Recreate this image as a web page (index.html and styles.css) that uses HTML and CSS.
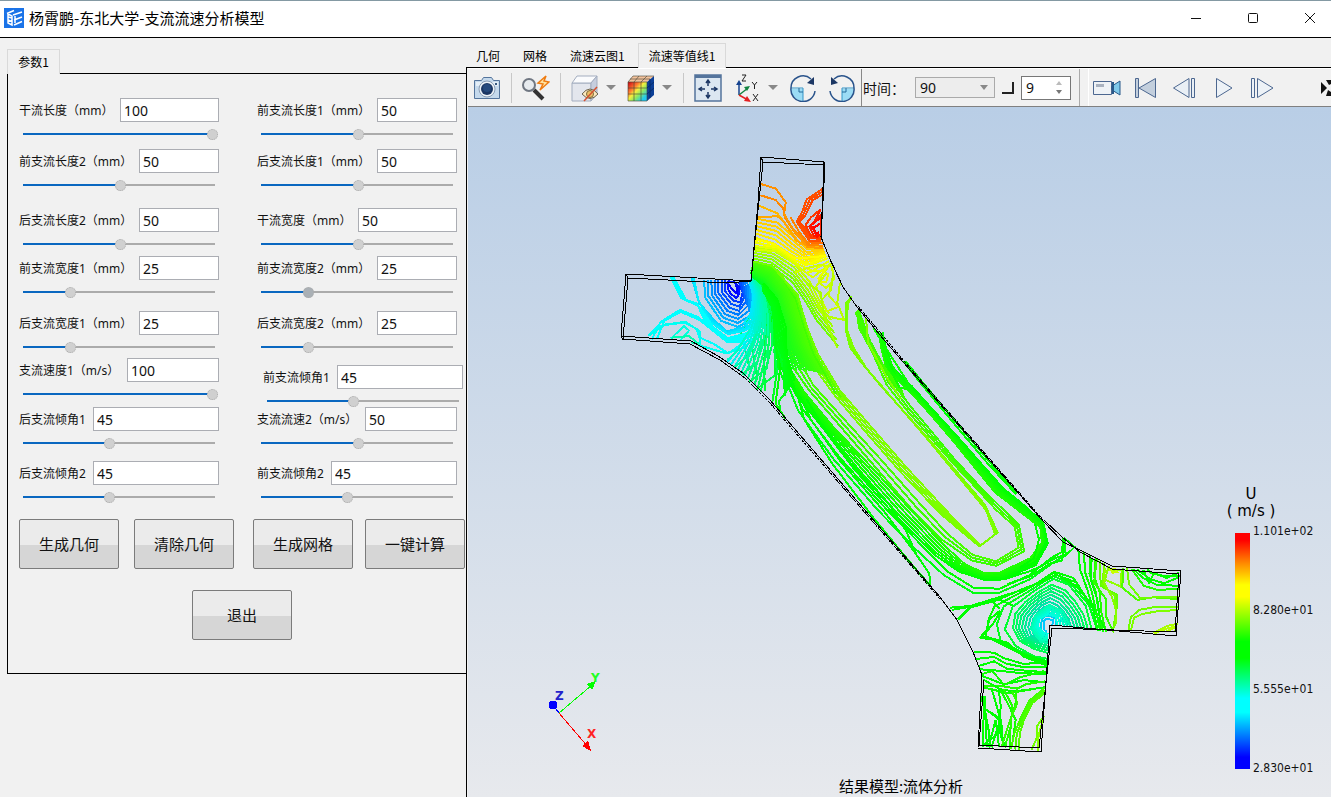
FILE: index.html
```html
<!DOCTYPE html>
<html lang="zh-CN">
<head>
<meta charset="utf-8">
<title>杨霄鹏-东北大学-支流流速分析模型</title>
<link rel="stylesheet" href="styles.css">
</head>
<body>
<div class="window">
  <header class="titlebar">
    <svg class="logo" viewBox="0 0 20 20"><rect width="20" height="20" fill="#1a73e8"/><path d="M3 5.500 10 2.500M4 6v9l4 2V8zM9 7l9-3M10 12l8-3M10 17l8-3.500M11 8v7M4 9l4 1M4 12l4 1.500" fill="none" stroke="#fff" stroke-width="1.500"/></svg>
    <h1 class="title">杨霄鹏-东北大学-支流流速分析模型</h1>
    <div class="window-buttons">
      <button class="window-button" aria-label="最小化"><svg viewBox="0 0 12 12"><path d="M1 6.500h10"/></svg></button>
      <button class="window-button" aria-label="最大化"><svg viewBox="0 0 12 12"><rect x="1.500" y="1.500" width="9" height="9" rx="1"/></svg></button>
      <button class="window-button" aria-label="关闭"><svg viewBox="0 0 12 12"><path d="m1 1 10 10M11 1 1 11"/></svg></button>
    </div>
  </header>
  <div class="body">
    <aside class="sidebar">
      <button class="tab tab-active side-tab">参数1</button>
      <form class="params">
        <div class="columns">
          <div class="column">
            <div class="field w99"><label for="a1">干流长度（mm）</label><input class="value" id="a1" value="100"><input class="slider" type="range" aria-label="干流长度" value="100" style="--fill:100%"></div>
            <div class="field w80 gap-7"><label for="a2">前支流长度2（mm）</label><input class="value" id="a2" value="50"><input class="slider" type="range" aria-label="前支流长度2" value="51" style="--fill:51%"></div>
            <div class="field w80 gap-15"><label for="a3">后支流长度2（mm）</label><input class="value" id="a3" value="50"><input class="slider" type="range" aria-label="后支流长度2" value="51" style="--fill:51%"></div>
            <div class="field w80 gap-4"><label for="a4">前支流宽度1（mm）</label><input class="value" id="a4" value="25"><input class="slider" type="range" aria-label="前支流宽度1" value="24" style="--fill:24%"></div>
            <div class="field w80 gap-11"><label for="a5">后支流宽度1（mm）</label><input class="value" id="a5" value="25"><input class="slider" type="range" aria-label="后支流宽度1" value="24" style="--fill:24%"></div>
            <div class="field w92 gap-3"><label for="a6">支流速度1（m/s）</label><input class="value" id="a6" value="100"><input class="slider" type="range" aria-label="支流速度1" value="100" style="--fill:100%"></div>
            <div class="field w126 gap-5"><label for="a7">后支流倾角1</label><input class="value" id="a7" value="45"><input class="slider" type="range" aria-label="后支流倾角1" value="45" style="--fill:45%"></div>
            <div class="field w126 gap-10"><label for="a8">后支流倾角2</label><input class="value" id="a8" value="45"><input class="slider" type="range" aria-label="后支流倾角2" value="45" style="--fill:45%"></div>
          </div>
          <div class="column">
            <div class="field w80"><label for="b1">前支流长度1（mm）</label><input class="value" id="b1" value="50"><input class="slider" type="range" aria-label="前支流长度1" value="51" style="--fill:51%"></div>
            <div class="field w80 gap-7"><label for="b2">后支流长度1（mm）</label><input class="value" id="b2" value="50"><input class="slider" type="range" aria-label="后支流长度1" value="51" style="--fill:51%"></div>
            <div class="field w99 gap-15"><label for="b3">干流宽度（mm）</label><input class="value" id="b3" value="50"><input class="slider" type="range" aria-label="干流宽度" value="51" style="--fill:51%"></div>
            <div class="field w80 gap-4"><label for="b4">前支流宽度2（mm）</label><input class="value" id="b4" value="25"><input class="slider slider-hot" type="range" aria-label="前支流宽度2" value="24" style="--fill:24%"></div>
            <div class="field w80 gap-11"><label for="b5">后支流宽度2（mm）</label><input class="value" id="b5" value="25"><input class="slider" type="range" aria-label="后支流宽度2" value="24" style="--fill:24%"></div>
            <div class="field w126 gap-10 indented"><label for="b6">前支流倾角1</label><input class="value" id="b6" value="45"><input class="slider" type="range" aria-label="前支流倾角1" value="45" style="--fill:45%"></div>
            <div class="field w92 tight"><label for="b7">支流流速2（m/s）</label><input class="value" id="b7" value="50"><input class="slider" type="range" aria-label="支流流速2" value="51" style="--fill:51%"></div>
            <div class="field w126 gap-10"><label for="b8">前支流倾角2</label><input class="value" id="b8" value="45"><input class="slider" type="range" aria-label="前支流倾角2" value="45" style="--fill:45%"></div>
          </div>
        </div>
        <div class="actions">
          <button type="button" class="action">生成几何</button>
          <button type="button" class="action">清除几何</button>
          <button type="button" class="action">生成网格</button>
          <button type="button" class="action">一键计算</button>
        </div>
        <button type="button" class="action action-exit">退出</button>
      </form>
    </aside>
    <main class="main">
      <nav class="tabs">
        <button class="tab">几何</button>
        <button class="tab">网格</button>
        <button class="tab">流速云图1</button>
        <button class="tab tab-active">流速等值线1</button>
      </nav>
      <section class="pane">
        <div class="toolbar">
          <div class="tools">
            <button class="tool" aria-label="截图"><svg viewBox="0 0 28 28"><path d="M1.500 6.500h7l2-3h8l2 3h6v18h-25z" fill="#c5d9ec" stroke="#54749c"/><path d="M3 8h22v4H3z" fill="#e4eef7"/><circle cx="14" cy="15" r="8" fill="#edf2f7" stroke="#8a9db5"/><circle cx="14" cy="15" r="6" fill="#1c3764"/><circle cx="14" cy="14" r="4" fill="#264a7e"/><path d="M22 10h2" stroke="#35577f" stroke-width="2"/></svg></button>
            <i class="sep"></i>
            <button class="tool" aria-label="快速缩放"><svg viewBox="0 0 28 28"><circle cx="7" cy="11" r="6" fill="#e7ebef" stroke="#707782" stroke-width="2"/><path d="m12 16 9 9" stroke="#333" stroke-width="4"/><path d="M24 2 16 9l5 1-3 6 9-8-5-1z" fill="#ffe3a0" stroke="#ee7b11" stroke-width="1.500"/></svg></button>
            <i class="sep"></i>
            <button class="tool" aria-label="隐藏"><svg viewBox="0 0 28 28"><path d="M1 9h19v18H1z" fill="#e3e6ed" stroke="#a3adbf"/><path d="m1 9 5-7h20l-6 7z" fill="#fafbfd" stroke="#a3adbf"/><path d="m20 9 6-7v18l-6 7z" fill="#c6cede" stroke="#a3adbf"/><path d="M11 20q8-10 16 0-8 9-16 0z" fill="#fbe8bd" stroke="#6b6350"/><circle cx="19" cy="20" r="3.500" fill="#ebbf67" stroke="#7c683c"/><path d="M13 27 26 13" stroke="#d55130" stroke-width="1.500"/></svg></button>
            <i class="drop"></i>
            <button class="tool" aria-label="云图"><svg viewBox="0 0 28 28"><defs><linearGradient id="cube" x1="0" y1="0" x2="1" y2="1"><stop offset=".05" stop-color="#d21318"/><stop offset=".3" stop-color="#ff7a30"/><stop offset=".45" stop-color="#f7ee3d"/><stop offset=".62" stop-color="#8fe85f"/><stop offset=".85" stop-color="#20c9f1"/></linearGradient></defs><path d="M1 8h19v19H1z" fill="url(#cube)"/><path d="m1 8 5-6h21l-7 6z" fill="#f3c29c"/><path d="m20 8 7-6v19l-7 6z" fill="#0c3f96"/><path d="M1 8h19v19H1zM7 8v19M14 8v19M1 14h19M1 20h19M1 8l5-6h21M7 8l5-6M14 8l6-6M3 5h20" fill="none" stroke="#45433599"/><path d="m20 14 7-6M20 20l7-6M23 5v19" stroke="#062c6c"/></svg></button>
            <i class="drop"></i>
            <i class="sep sep-after-drop"></i>
            <button class="tool" aria-label="适应窗口"><svg viewBox="0 0 28 28"><path d="M1 1h26v26H1z" fill="#dce7f1" stroke="#54749c" stroke-width="1.500"/><path d="M1 1h26v3H1z" fill="#54749c"/><path d="M14 7v5M14 18v5M6 15h5M17 15h5M12 9l2-3 2 3M12 21l2 3 2-3M8 13l-3 2 3 2M20 13l3 2-3 2" fill="none" stroke="#1c3764" stroke-width="1.500"/></svg></button>
            <button class="tool tool-wide" aria-label="视角"><svg viewBox="0 0 28 28"><path d="M6 21V8" stroke="#16438f" stroke-width="1.500"/><path d="m3 11 3-5 3 5z" fill="#16438f"/><path d="m6 21 9-7" stroke="#118340" stroke-width="1.500"/><path d="m17 12-6 1 3 4z" fill="#118340"/><path d="m6 21 9 5" stroke="#e31f21" stroke-width="1.500"/><path d="m18 28-4-6-3 5z" fill="#e31f21"/><path d="M9 1h4L9 7h4M19 8l2.500 3L24 8M21.500 11v4M20 20l5 7M25 20l-5 7" fill="none" stroke="#222"/></svg></button>
            <i class="drop"></i>
            <button class="tool" aria-label="逆时针旋转"><svg viewBox="0 0 28 28"><path d="M2 15h12v12A12 12 0 0 1 2 15" fill="#9bdcf5"/><path d="M2 14h12v13" fill="none" stroke="#3095c8"/><path d="M10 14v4h4" fill="none" stroke="#246b9b"/><path d="M22 5A12 12 0 0 0 2 14a12 12 0 0 0 24 3" fill="none" stroke="#29538b" stroke-width="1.500"/><path d="M25 3v8l-7-2z" fill="#1c3764"/></svg></button>
            <button class="tool tool-wide" aria-label="顺时针旋转"><svg viewBox="0 0 28 28"><path d="M14 15h12a12 12 0 0 1-12 12z" fill="#9bdcf5"/><path d="M26 14H14v13" fill="none" stroke="#3095c8"/><path d="M18 14v4h-4" fill="none" stroke="#246b9b"/><path d="M6 5a12 12 0 0 1 20 9A12 12 0 0 1 2 17" fill="none" stroke="#29538b" stroke-width="1.500"/><path d="M3 3v8l7-2z" fill="#1c3764"/></svg></button>
          </div>
          <div class="time">
            <label for="time">时间：</label>
            <span class="select-wrap"><select id="time" class="select"><option>90</option></select></span>
            <i class="corner"></i>
            <span class="spin"><input id="frame" class="spin-value" aria-label="帧" value="9"><span class="spin-arrows"><button class="up" aria-label="增加"></button><button class="down" aria-label="减少"></button></span></span>
          </div>
          <div class="player">
            <button class="tool" aria-label="录像"><svg viewBox="0 0 28 28"><path d="M.5 7.500h18v13H.5z" fill="#eef2f6" stroke="#4c6790"/><path d="M3 10h8v3H3z" fill="#a9b2c0"/><path d="m19 12 8-5v14l-8-5z" fill="#7fc9ea" stroke="#28598a"/><path d="M20 8v12" stroke="#28598a" stroke-width="2"/></svg></button>
            <button class="tool" aria-label="首帧"><svg viewBox="0 0 28 28"><path d="M3.500 4.500h3v19h-3zM23.500 4.500v19L7 14z" fill="#c3cfdd" stroke="#4c6790"/></svg></button>
            <button class="tool" aria-label="上一帧"><svg viewBox="0 0 28 28"><path d="M20.500 4.500h3v19h-3zM18 4.500v19L2.500 14z" fill="#e9eff5" stroke="#4c6790"/></svg></button>
            <button class="tool" aria-label="播放"><svg viewBox="0 0 28 28"><path d="M6.500 4.500v19L22 14z" fill="#edf2f7" stroke="#4c6790"/></svg></button>
            <button class="tool" aria-label="下一帧"><svg viewBox="0 0 28 28"><path d="M2.500 4.500h3v19h-3zM8.500 4.500v19L24 14z" fill="#edf2f7" stroke="#4c6790"/></svg></button>
          </div>
          <button class="more" aria-label="更多"><svg viewBox="0 0 10 18"><path d="M0 3l6 6-6 6z"/><path d="M5 1h5v4L8 6M5 17h5v-4l-3-2"/></svg></button>
        </div>
        <div class="viewport">
          <svg class="scene" viewBox="468 107 863 690">
            <g id="contours"></g>
            <g class="edges">
              <path d="M761 157 824 162 821 237 825 247 831 261 843 287 857 307 880 335 903 362 1042 520 1063 542 1080 550 1112 566 1181 571 1176 636 1050 625 1041 752 978 748 982 675 973 652 957 620 940 597 787 420 770 400 743 373 718 356 691 341 621 336 626 274 751 281 758 203z"/>
              <path d="M763 162 825 165 821 237 832 264 843 287M763 162 757 220 751 281M628 278 727 283 751 281M628 278 623 339 690 344 720 360 745 378M626 274 628 278M621 336 623 340M761 157 763 162M824 162 825 165M1044 520 1062 537 1080 552 1112 569 1179 574 1175 632 1052 628 1039 748 979 745 984 680"/>
              <path class="double" d="m745 378 25 25 17 20 154 177M858 306l46 55 140 160"/>
            </g>
            <g class="axes">
              <path d="m559 713 33-28" stroke="#0f0"/><path d="m596 681-4 9-6-6z" fill="#0f0"/>
              <path d="m559 713 29 34" stroke="#f00"/><path d="m591 751-9-5 6-6z" fill="#f00"/>
              <path d="m553 705 6 8" stroke="#00f"/><circle cx="553" cy="705" r="4.500" fill="#00f"/>
              <text x="591" y="682" fill="#22ff22">Y</text><text x="587" y="738" fill="#f22">X</text><text x="555" y="700" fill="#22c">Z</text>
            </g>
          </svg>
          <div class="legend">
            <div class="legend-title">U<br>( m/s )</div>
            <div class="legend-scale">
              <div class="legend-bar"></div>
              <div class="legend-labels"><span>1.101e+02</span><span>8.280e+01</span><span>5.555e+01</span><span>2.830e+01</span></div>
            </div>
          </div>
          <div class="caption">结果模型:流体分析</div>
        </div>
      </section>
    </main>
  </div>
</div>
<script src="contours.js"></script>
</body>
</html>
```

FILE: styles.css
```css
* { box-sizing: border-box; }
body {
  margin: 0;
  background: #f1f1f1;
  color: #111;
  font: 12px/16px "Noto Sans", "Noto Sans CJK SC", sans-serif;
}
button, input, select { font: inherit; color: inherit; margin: 0; padding: 0; }
button { border: 0; background: none; }
.window { display: flex; flex-direction: column; min-height: 100vh; }

.titlebar {
  display: flex;
  align-items: center;
  height: 38px;
  padding: 0 0 2px 4px;
  background: #fff;
  border-top: 1px solid #8499a3;
  border-bottom: 1px solid #000;
}
.logo { width: 20px; height: 20px; margin-right: 5px; }
.title { margin: 0; font: 15px/20px "Noto Sans CJK SC", sans-serif; color: #000; }
.window-buttons { display: flex; gap: 15px; margin-left: auto; }
.window-button { width: 42px; height: 28px; }
.window-button svg { width: 12px; height: 12px; fill: none; stroke: #111; display: block; margin: auto; }

.body { display: flex; flex: 1; }
.sidebar { width: 466px; flex: none; padding: 11px 0 0 7px; }
.tab {
  height: 24px;
  padding: 0 11px;
  border: 1px solid transparent;
  border-bottom: 0;
  font: 12px/24px "Noto Sans CJK SC", sans-serif;
  color: #000;
}
.tab-active { border-color: #d9d9d9; background: #f1f1f1; }
.side-tab { display: block; position: relative; height: 25px; margin-bottom: -1px; padding: 0 10px; width: 53px; }
.params { border: 1px solid #000; border-right: 0; padding: 24px 0 33px 11px; }
.columns { display: flex; gap: 38px; }
.column { width: 200px; }
.field { display: grid; grid-template-columns: 1fr auto; row-gap: 4px; }
.field label { padding-top: 2px; font: 12px/22px "Noto Sans", "Noto Sans CJK SC", sans-serif; white-space: nowrap; }
.gap-3 { margin-top: 3px; }
.gap-4 { margin-top: 4px; }
.gap-5 { margin-top: 5px; }
.gap-7 { margin-top: 7px; }
.gap-10 { margin-top: 10px; }
.gap-11 { margin-top: 11px; }
.gap-15 { margin-top: 15px; }
.indented { margin-left: 6px; margin-right: -6px; }
.tight { margin-top: -2px; }
.value {
  height: 24px;
  padding: 0 3px;
  border: 1px solid #abadb3;
  background: #fff;
  font: 14px/20px "Noto Sans", sans-serif;
}
.w80 .value { width: 80px; }
.w92 .value { width: 92px; }
.w99 .value { width: 99px; }
.w126 .value { width: 126px; }
.slider {
  grid-column: 1 / 3;
  appearance: none;
  height: 16px;
  margin: 0 1px;
  background: linear-gradient(to right, #0a67c0 var(--fill), #ababab 0) no-repeat center / calc(100% - 6px) 2px;
}
.slider::-webkit-slider-thumb {
  appearance: none;
  width: 11px;
  height: 11px;
  border: 1px dotted #aaa;
  border-radius: 50%;
  background: #d0d0d0;
}
.slider-hot::-webkit-slider-thumb { background: #aab0b5; }
.actions { display: grid; grid-template-columns: 115px 119px 112px 100px; margin-top: 14px; }
.action {
  width: 100px;
  height: 50px;
  border: 1px solid #7b7b7b;
  border-radius: 2px;
  background: linear-gradient(#ebebeb 52%, #d6d6d6 52%);
  font: 15px/20px "Noto Sans CJK SC", sans-serif;
}
.action-exit { display: block; margin: 21px 0 0 173px; }

.main { display: flex; flex-direction: column; flex: 1; min-width: 0; }
.tabs { display: flex; height: 30px; padding-top: 5px; margin-bottom: -1px; }
.tabs .tab { height: 25px; padding: 0 10px; }
.tabs .tab-active { position: relative; z-index: 1; }
.tabs .tab:nth-child(-n+3) { margin-right: 1px; padding-left: 9px; padding-right: 11px; }
.pane { display: flex; flex-direction: column; flex: 1; border-top: 1px solid #000; border-left: 1px solid #000; padding-left: 1px; }
.toolbar { display: flex; height: 39px; overflow: hidden; background: #f1f1f1; border-top: 1px solid #fff; border-bottom: 1px solid #808080; }
.tools { display: flex; align-items: center; width: 394px; flex: none; padding-left: 5px; border-right: 1px solid #888; }
.tool { width: 28px; height: 28px; flex: none; }
.tool svg { display: block; width: 28px; height: 28px; }
.tool-wide { margin-left: 11px; }
.sep { width: 1px; height: 30px; margin: 0 10px; background: #c8c8c8; flex: none; }
.sep-after-drop { margin-left: 0; }
.drop { width: 0; height: 0; margin: 0 11px 0 7px; border: 5px solid transparent; border-top-color: #888; border-bottom: 0; flex: none; }
.time { display: flex; align-items: center; width: 218px; flex: none; padding-left: 1px; border-right: 1px solid #aaa; }
.time label { width: 52px; font: 14px/20px "Noto Sans CJK SC", sans-serif; white-space: nowrap; }
.select-wrap { position: relative; }
.select-wrap::after { content: ""; position: absolute; right: 7px; top: 8px; border: 4px solid transparent; border-top: 5px solid #888; border-bottom: 0; }
.select { display: block; appearance: none; width: 80px; height: 21px; padding: 0 4px; border: 1px solid #aaa; border-radius: 0; background: #ededed; font: 14px/18px "Noto Sans", sans-serif; }
.corner { width: 12px; height: 12px; margin: 0 7px; border-right: 2px solid #222; border-bottom: 2px solid #222; }
.spin { display: flex; width: 50px; height: 24px; border: 1px solid #777; background: #fff; }
.spin-value { width: 34px; padding: 0 4px; border: 0; background: none; font: 14px/20px "Noto Sans", sans-serif; }
.spin-arrows { display: flex; flex-direction: column; justify-content: center; gap: 5px; }
.up, .down { width: 6px; height: 4px; background: #bbb; clip-path: polygon(50% 0, 100% 100%, 0 100%); }
.down { background: #777; clip-path: polygon(0 0, 100% 0, 50% 100%); }
.player { display: flex; align-items: center; gap: 11px; padding-left: 4px; margin-left: 8px; border-left: 1px solid #fff; }
.more { width: 10px; margin-left: auto; flex: none; }
.more svg { width: 10px; height: 18px; display: block; fill: #111; }

.viewport { position: relative; flex: 1; min-height: 0; overflow: hidden; background: linear-gradient(#b9cee6, #e7e9ed); }
.scene { display: block; width: 100%; height: auto; }
.edges { fill: none; stroke: #000; shape-rendering: crispEdges; }
.double { stroke-dasharray: 3 1; }
#contours { fill: none; stroke-width: 2; shape-rendering: crispEdges; }
.axes { fill: none; shape-rendering: crispEdges; font: bold 12px "DejaVu Sans", sans-serif; }
.legend { position: absolute; right: 17px; bottom: 19px; width: 88px; color: #111; }
.legend-title { width: 50px; text-align: center; font: 15px/17px "DejaVu Sans", sans-serif; margin-bottom: 9px; color: #000; }
.legend-scale { display: flex; gap: 3px; height: 249px; }
.legend-bar {
  flex: none;
  width: 15px;
  height: 236px;
  margin: 4px 0 0 9px;
  background: linear-gradient(#f00 0 3%, #ff8c00 13%, #ff0 22%, #ff0 27%, #0f0 46%, #0f0 53%, #0ff 70%, #0ff 76%, #00f 95%);
}
.legend-labels { display: flex; flex-direction: column; justify-content: space-between; height: 251px; margin-top: -5px; font: 12px/14px "DejaVu Sans Condensed", "DejaVu Sans", sans-serif; font-stretch: condensed; }
.caption { position: absolute; left: 0; right: 0; bottom: 0; padding-left: 3px; text-align: center; font: 15px/22px "Noto Sans CJK SC", sans-serif; color: #000; }
```

FILE: contours.js
```js
// Each bundle blends from polyline a to polyline b in n steps, colour c to d.
const layer = document.getElementById('contours');
const parse = s => s.trim().split(/\s+/).map(p => p.split(',').map(Number));
const rgb = h => [1, 3, 5].map(i => parseInt(h.slice(i, i + 2), 16));

function resample(points, count) {
  const at = [0];
  for (let i = 1; i < points.length; i++) {
    at.push(at[i - 1] + Math.hypot(points[i][0] - points[i - 1][0], points[i][1] - points[i - 1][1]));
  }
  const total = at[at.length - 1];
  return Array.from({ length: count }, (_, i) => {
    const s = total * i / (count - 1);
    let k = 1;
    while (k < points.length - 1 && at[k] < s) k++;
    const t = (s - at[k - 1]) / (at[k] - at[k - 1]);
    return points[k].map((v, j) => points[k - 1][j] + (v - points[k - 1][j]) * t);
  });
}

function line(points, color) {
  const el = document.createElementNS('http://www.w3.org/2000/svg', 'polyline');
  el.setAttribute('points', points.map(p => p.map(v => v.toFixed(1)).join()).join(' '));
  el.setAttribute('stroke', color);
  layer.append(el);
}

function bundle(origin, scale, n, c, d, a, b) {
  let pa = parse(a), pb = parse(b || a);
  if (pa.length !== pb.length) {
    const count = Math.max(pa.length, pb.length) + 2;
    pa = resample(pa, count);
    pb = resample(pb, count);
  }
  const ca = rgb(c), cb = rgb(d);
  for (let i = 0; i < n; i++) {
    const t = n > 1 ? i / (n - 1) : 0;
    const color = 'rgb(' + ca.map((v, k) => Math.round(v + (cb[k] - v) * t)).join() + ')';
    line(pa.map((p, j) => p.map((v, k) => {
      const jitter = Math.sin(i * 12.9 + j * 7.3 + k * 4.1) * 0.8;
      return origin[k] + (v + (pb[j][k] - v) * t) * scale + jitter;
    })), color);
  }
}

const main = (...r) => bundle([0, 0], 1, ...r);
const inlet = (...r) => bundle([610, 140], 1 / 3, ...r);
const right = (...r) => bundle([820, 280], 1 / 3, ...r);
const left = (...r) => bundle([740, 360], 1 / 3, ...r);
const outlet = (...r) => bundle([920, 490], 1 / 3, ...r);

// Main channel
main(4, '#80ff00', '#78ff00',
  '752,262 770,273 787,292 800,320 812,343 820,362 840,391 870,427 905,467 945,509 981,545 996,534 986,510 927,440 884,390 866,368 854,347 848,330 848,305 851,297',
  '752,264 768,277 783,296 795,325 808,348 816,370 834,396 863,430 899,470 941,513 980,546 998,533 984,505 924,435 880,385 862,362 851,347 846,330 846,303 851,297');
main(3, '#48ff00', '#38ff00',
  '752,266 770,282 782,305 790,335 800,360 814,385 847,423 880,460 920,505 947,533 973,554 997,561 1019,548 1014,527 995,510 978,490 953,462 907,409 887,385 872,353 858,328 857,310',
  '751,268 766,284 778,310 786,340 794,367 809,390 839,426 874,467 912,510 941,538 973,560 997,566 1024,552 1018,525 998,505 982,488 955,458 910,405 890,380 874,350 860,325 860,308');
main(6, '#20ff00', '#00ff00',
  '751,270 763,284 774,310 780,340 790,367 805,392 833,427 870,467 908,508 942,543 965,563 985,573 1000,573 1030,559 1041,543 1040,527 1018,509 996,492 985,480 953,442 927,412 910,392 887,369 882,347 880,335',
  '750,273 759,285 769,312 775,342 782,368 796,396 821,427 853,468 893,512 935,554 960,572 985,581 1002,580 1035,565 1048,543 1044,522 1022,503 1003,489 990,475 958,438 930,406 913,386 893,367 885,345 882,333');
main(2, '#00ff00', '#00ff10',
  '760,284 773,310 780,345 790,376 803,408 840,457 882,505 918,543 947,572 973,587 1000,588 1030,575 1052,558 1061,553 1063,538',
  '758,287 770,313 777,348 786,379 799,410 834,459 877,510 914,549 943,575 973,592 1000,592 1031,579 1055,562 1065,556 1064,540');
left(2, '#00ff00', '#00ff00', '180,110 210,180 300,305 430,450 530,580 570,640 572,680', '175,120 190,180 275,310 400,470 500,590 540,640 572,680');
left(1, '#00ff00', '#00ff00', '200,120 245,200 330,310 450,435 500,510 530,580');
left(4, '#00ff60', '#00ff20', '30,30 0,-80 40,-150', '95,130 105,60 100,-140');
left(2, '#00ff10', '#00ff00', '120,150 115,125 140,90 115,20 105,-100', '135,178 110,140 105,130 120,30 120,-80');
right(2, '#00ff00', '#00ff00', '250,245 300,312 420,455 500,545 590,640', '255,245 305,308 425,448 505,538 592,638');
right(3, '#40ff00', '#40ff00', '115,90 150,190 190,260 245,330 255,355', '105,100 140,180 170,240 230,310 250,350');
right(1, '#80ff00', '#80ff00', '138,115 142,190 170,240 200,290 245,355');
right(3, '#10ff00', '#10ff00', '160,145 185,190 215,235 260,300 275,335', '185,165 190,215 200,250 240,320 280,330');

// Inlet: blue core and cyan fan
inlet(7, '#0038ff', '#00c0ff', '345,422 342,455 368,482 390,485 400,455 388,425', '280,420 285,470 335,540 385,560 430,540 424,430');
inlet(2, '#0000ff', '#0010ff', '350,430 365,450 385,462 382,440 370,425', '352,425 350,455 385,475 393,450 385,432 352,425');
inlet(3, '#00d8ff', '#00f0ff', '245,415 265,490 310,540 350,572 400,560 430,540', '250,415 262,480 300,545 355,580 410,570 440,550');
inlet(3, '#00ffff', '#00ffff', '182,412 210,475 265,500 310,560 355,592 410,580 445,550', '188,412 225,480 260,490 290,550 352,600 410,595 445,570');
inlet(2, '#00ffff', '#00ffff', '115,590 155,545 208,510 265,530 350,600 400,598 450,580', '140,600 160,545 210,515 270,538 355,605 410,605 450,590');
inlet(2, '#00ffff', '#00fff0', '125,600 145,560 220,548 260,565 270,590 315,612 355,642 400,610', '115,590 165,555 225,545 270,572 272,615 350,640 400,625 440,590');
inlet(2, '#00ffe0', '#00ffb0', '182,598 220,560 235,572 210,600', '185,595 235,590 265,612 245,605');
inlet(11, '#00f0ff', '#00ff50', '422,420 430,480 425,545 405,595 385,625 355,665', '428,405 468,450 490,530 485,620 465,690 450,755');
inlet(10, '#00e8ff', '#00ffa0', '418,425 428,470 420,520 400,550', '430,410 462,450 475,520 475,590');
inlet(5, '#00ffc0', '#00ff40', '420,570 380,635 350,660', '490,630 500,700 440,745');

// Inlet: green turn
inlet(18, '#50ff00', '#00ff20', '428,368 490,388 540,445 570,530 600,610 650,705', '427,410 455,435 480,480 498,550 505,620 520,680');
inlet(6, '#00ff00', '#00ff10', '460,430 500,480 525,560 530,640 555,720', '455,450 485,500 500,600 525,660 525,770');
inlet(3, '#40ff00', '#70ff00', '500,390 555,480 580,560 610,640 680,760', '480,375 560,465 590,560 625,640 710,780');

// Inlet: yellow, orange and red bands
inlet(6, '#c0ff00', '#70ff00', '430,325 490,335 550,370 600,425 630,480 660,520', '428,365 480,375 550,425 590,485 620,540 684,622');
inlet(7, '#ffc800', '#f8ff00', '440,238 500,250 550,292 590,325 645,325', '432,305 490,322 540,350 590,375 650,350');
inlet(4, '#ffff00', '#d8ff00', '432,300 490,315 550,355 605,350 650,345', '432,330 500,335 560,375 610,410 665,370');
inlet(2, '#ffb800', '#ffa800', '445,198 500,222 530,260 570,310 640,318', '440,235 500,230 520,245 560,300 600,320');
inlet(2, '#ff9000', '#ff8800', '450,133 495,148 525,187 522,222 550,265 600,310', '450,168 495,182 518,205 525,230 560,280 600,320');
inlet(3, '#ff9800', '#ff7000', '520,220 550,275 590,322 640,322', '560,245 580,280 605,308 640,308');
inlet(3, '#ff5000', '#ff4800', '638,148 588,180 575,215 560,243 600,300 635,302', '638,165 605,182 585,225 570,243 605,285 635,292');
inlet(3, '#ff3800', '#ff0000', '632,210 600,235 585,255 605,292 630,292', '632,250 620,258 608,262 620,280 630,275');
inlet(2, '#ff2000', '#ff1000', '632,210 612,245 632,225 632,290', '632,235 600,258 620,290 630,280');
inlet(2, '#d0ff00', '#e8ff00', '555,400 620,375 665,378 675,415 645,450 620,420 665,370', '590,400 630,390 655,400 650,430 620,425 650,380');
inlet(2, '#b8ff00', '#c8ff00', '690,430 680,490 700,540 640,525 625,490 665,450 670,400', '660,430 655,470 685,500 650,512 635,470 620,440 650,400');
inlet(1, '#a8ff00', '#a8ff00', '590,430 630,460 640,530 655,560 684,622');

// Outlet: corner pool
outlet(11, '#00c8ff', '#00ff50', '397,407 398,388 385,385 375,390 370,400 370,412 377,420 383,422', '505,418 490,360 440,305 390,285 330,320 290,360 280,420 300,455 350,485 383,490');
outlet(5, '#00ffb0', '#00ffe0', '450,410 425,365 385,345 345,375 335,415 365,455 383,460', '410,408 405,380 385,370 360,385 355,410 370,430 383,435');
outlet(3, '#00ff30', '#00ff00', '515,420 495,350 445,285 400,265 345,300 280,350 255,420 285,470 340,500 383,505', '545,420 515,345 465,285 400,245 335,290 225,350 205,390 195,440 300,490 383,520');
outlet(2, '#00ff00', '#00ff00', '90,355 150,350 225,325 300,300 370,270 405,245 460,265 500,330', '95,362 150,352 230,330 320,290 380,270 410,255 470,280 510,350');
outlet(2, '#00ff00', '#00ff00', '115,392 148,355 215,335 240,355', '112,390 150,350 230,325 280,345');
outlet(2, '#00ff00', '#00ff00', '430,145 430,212 400,212 330,260 260,285', '430,145 470,180 430,195 400,205 345,240 250,270');
outlet(2, '#00ff00', '#00ff00', '345,105 355,150 340,205 300,230', '370,105 378,155 345,215 300,235');
outlet(4, '#00ff00', '#20ff00', '475,180 478,240 500,300 520,360 535,420', '525,205 520,260 540,310 545,360 560,425');
outlet(2, '#00ff00', '#30ff00', '515,205 510,270 530,330 540,385 560,420', '530,205 520,280 555,325 560,380 580,420');
outlet(3, '#60ff00', '#88ff00', '540,215 540,290 590,315 590,350 580,425', '565,230 550,280 575,320 590,360 590,400');
outlet(2, '#90ff00', '#c8ff00', '555,235 550,270 600,290 605,240 565,235', '570,235 575,250 590,245 585,235 570,238');
outlet(2, '#50ff00', '#70ff00', '610,235 605,295 650,330 700,320 778,325', '620,235 625,285 660,325 700,320 778,318');
outlet(2, '#20ff00', '#00ff00', '635,240 670,290 710,300 778,295', '640,240 665,265 710,285 778,285');
outlet(2, '#00ff00', '#00ff00', '650,240 690,270 730,280 778,260', '680,240 690,250 730,258 780,255');
outlet(1, '#00ff00', '#00ff00', '670,242 685,280 700,250 740,262 780,245');
outlet(2, '#70ff00', '#80ff00', '625,425 630,385 655,360 700,350 775,350', '632,425 640,385 665,372 710,362 775,358');
outlet(2, '#a8ff00', '#b8ff00', '700,430 740,410 768,402 765,425', '700,433 745,415 768,410 740,422');

// Outlet: lower branch
outlet(2, '#00ff00', '#00ff00', '180,445 200,420 205,390 240,360', '178,448 195,430 218,400 240,365');
outlet(2, '#00ff00', '#00ff00', '180,445 240,455 300,490 383,515', '185,440 260,460 310,500 383,525');
outlet(3, '#00ff00', '#00ff00', '162,488 220,490 250,505 310,520 383,515', '175,530 220,515 260,535 320,540 383,545');
outlet(2, '#00ff00', '#00ff00', '180,540 240,545 300,550 380,550', '185,560 250,585 310,570 380,575');
outlet(2, '#10ff00', '#20ff00', '185,555 215,545 250,585 300,560 375,540', '188,590 240,590 290,595 320,580 378,572');
outlet(2, '#00ff00', '#10ff00', '188,570 240,600 280,605 375,590', '188,595 215,600 260,610 340,595');
outlet(3, '#00ff00', '#00ff00', '182,620 190,650 188,700 190,768', '195,620 192,660 205,720 212,770');
outlet(2, '#00ff00', '#00ff00', '190,655 235,690 238,770', '192,660 240,685 245,740 260,770');
outlet(2, '#00ff00', '#00ff00', '215,600 225,640 242,700 250,770', '235,600 240,650 235,700 215,770');
outlet(2, '#10ff00', '#20ff00', '240,600 260,640 285,690 275,770', '250,600 275,650 270,710 255,770');
outlet(2, '#20ff00', '#30ff00', '290,600 285,640 270,690 270,775', '275,605 290,640 265,700 245,770');
outlet(3, '#40ff00', '#50ff00', '375,595 325,635 300,685 282,730 275,775', '372,612 335,640 312,685 300,730 300,778');
outlet(2, '#70ff00', '#88ff00', '372,680 350,710 348,745 335,778', '370,692 358,720 352,750 355,780');
outlet(1, '#00ff00', '#00ff00', '190,768 230,735 225,690 205,770');
```
